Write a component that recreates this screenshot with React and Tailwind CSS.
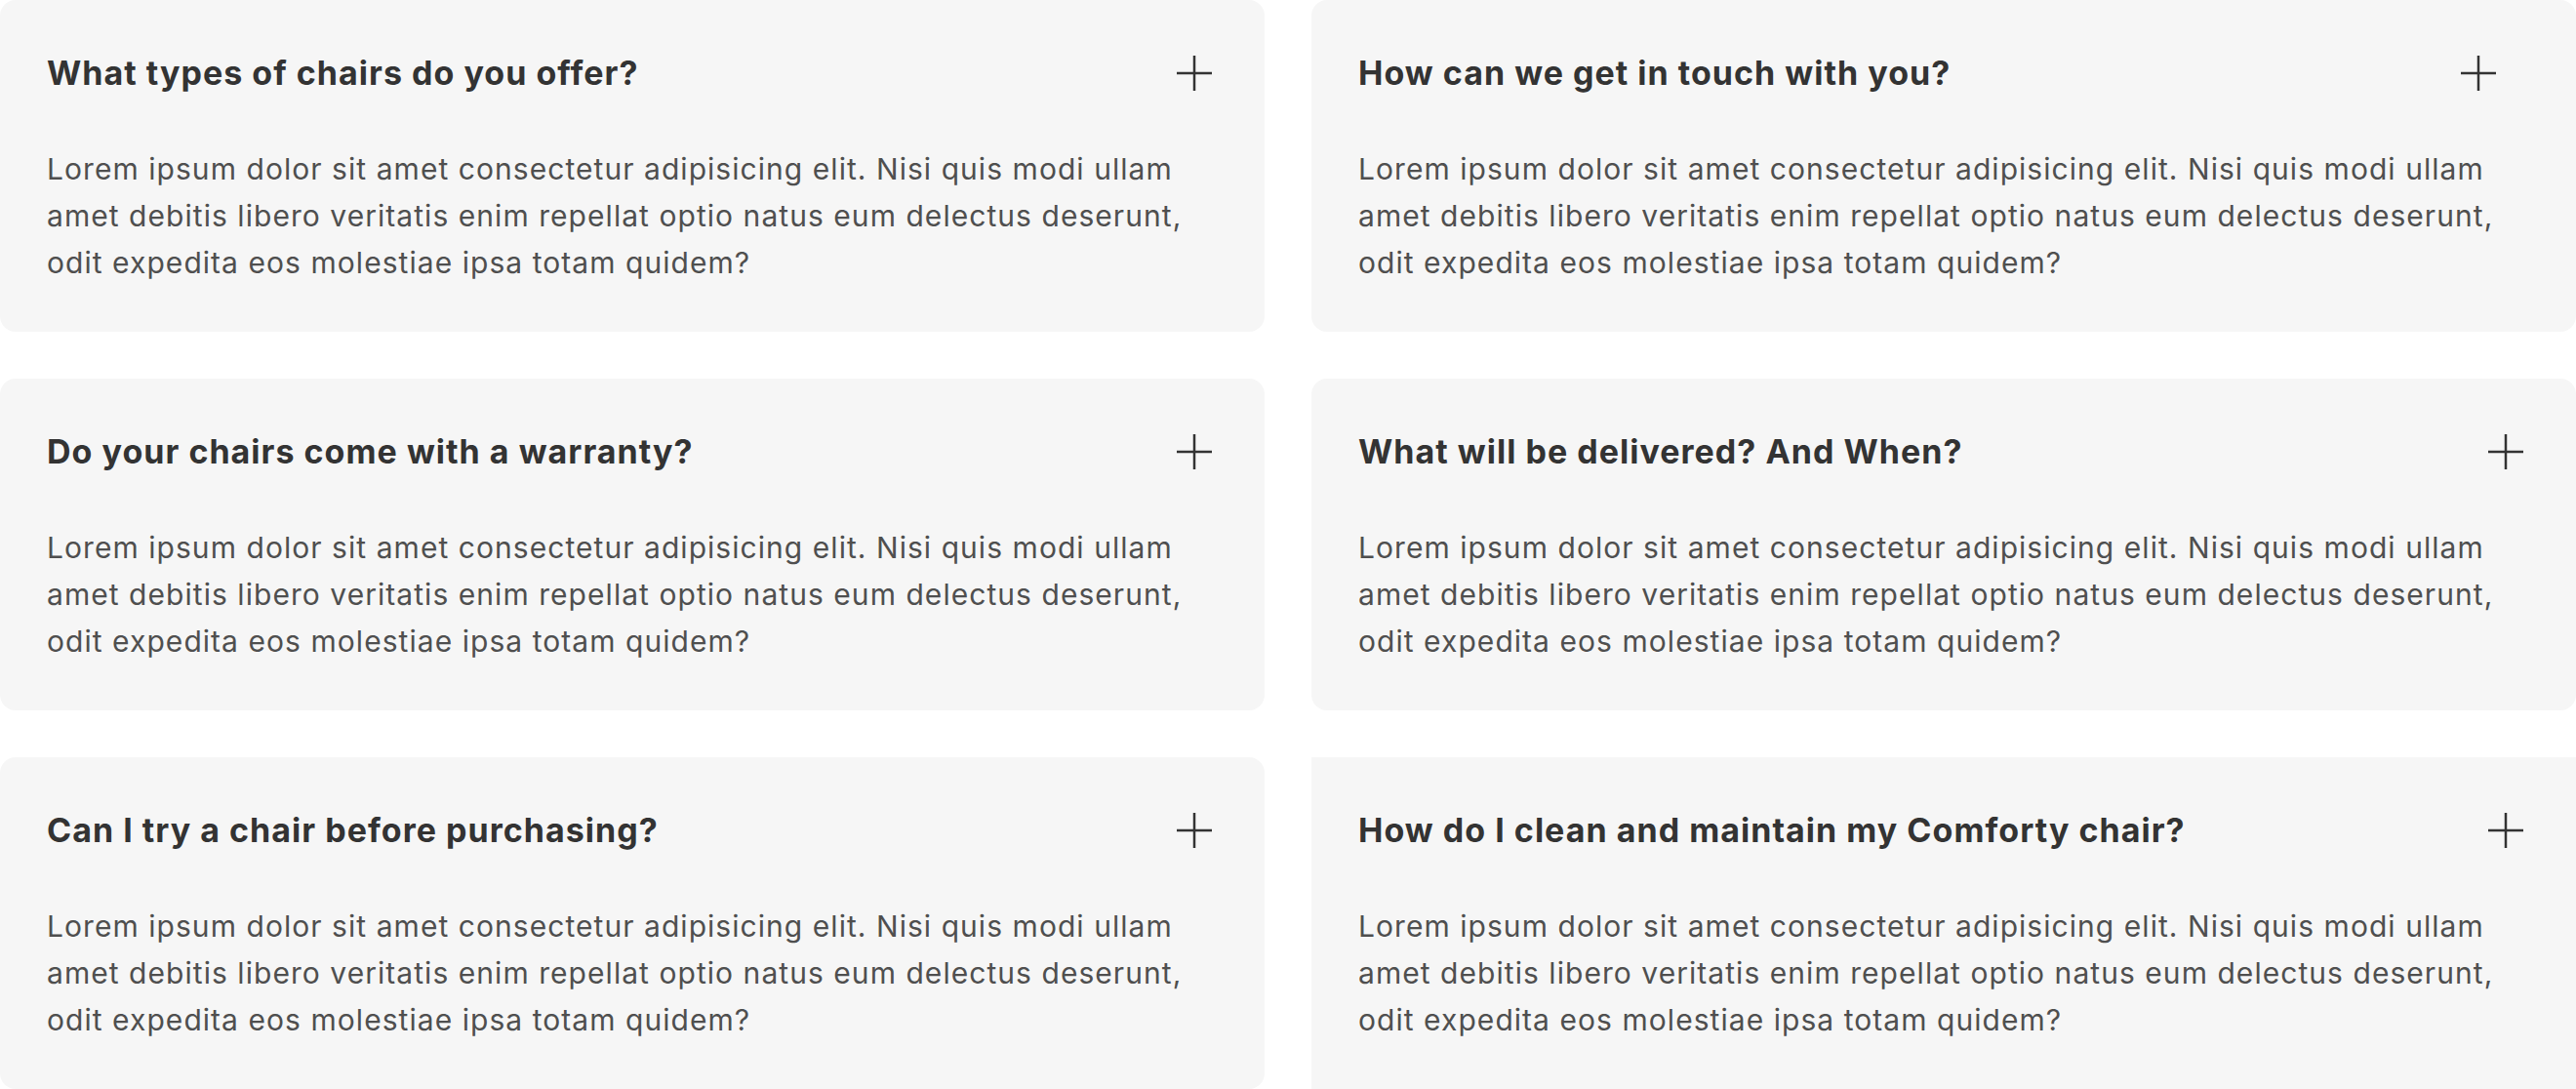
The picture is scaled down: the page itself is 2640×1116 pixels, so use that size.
import React from 'react';

const LOREM =
  'Lorem ipsum dolor sit amet consectetur adipisicing elit. Nisi quis modi ullam amet debitis libero veritatis enim repellat optio natus eum delectus deserunt, odit expedita eos molestiae ipsa totam quidem?';

const faqs = [
  { id: 1, q: 'What types of chairs do you offer?' },
  { id: 2, q: 'How can we get in touch with you?', iconShift: true },
  { id: 3, q: 'Do your chairs come with a warranty?' },
  { id: 4, q: 'What will be delivered? And When?' },
  { id: 5, q: 'Can I try a chair before purchasing?' },
  { id: 6, q: 'How do I clean and maintain my Comforty chair?', square: true },
];

function PlusIcon() {
  return (
    <svg width="48" height="48" viewBox="0 0 24 24" fill="none" stroke="#333333" strokeWidth="1.25" strokeLinecap="butt">
      <path d="M3 12h18" />
      <path d="M12 3v18" />
    </svg>
  );
}

function FaqCard({ q, iconShift, square }) {
  return (
    <div className={`bg-[#f6f6f6] px-12 pt-[49px] pb-[47px] ${square ? 'rounded-none' : 'rounded-2xl'}`}>
      <div className="flex h-[52px] items-center justify-between">
        <h3 className="text-[34px] font-bold leading-[52px] tracking-[0.03em] text-[#333333]">{q}</h3>
        <button className={`shrink-0 ${iconShift ? 'mr-[28px]' : ''}`} aria-label="Toggle">
          <PlusIcon />
        </button>
      </div>
      <p className="mt-12 max-w-[1190px] text-[30px] leading-[48px] tracking-[0.035em] text-[#4f4f4f]">{LOREM}</p>
    </div>
  );
}

export default function App() {
  return (
    <div className="grid min-h-[1116px] grid-cols-2 gap-12 bg-white font-['Inter',sans-serif]">
      {faqs.map((f) => (
        <FaqCard key={f.id} {...f} />
      ))}
    </div>
  );
}
